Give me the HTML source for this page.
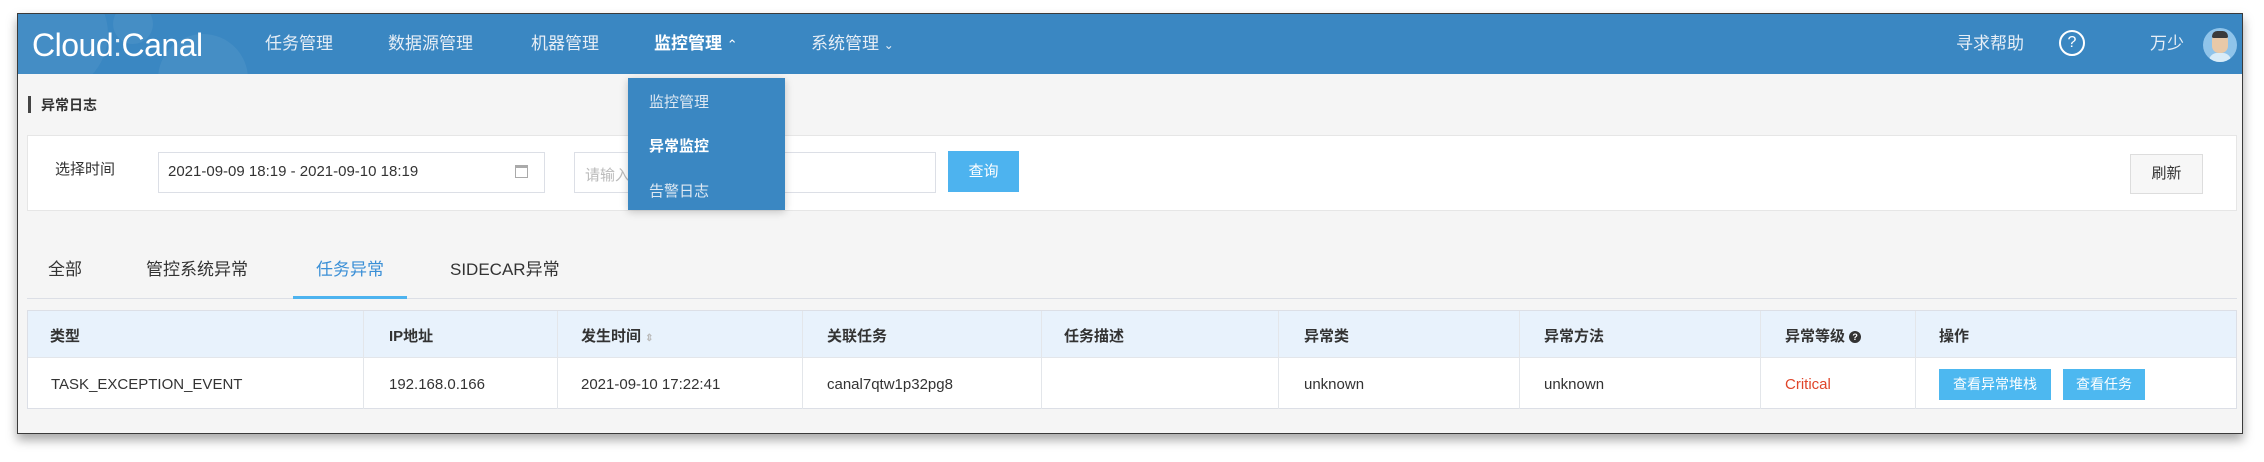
<!DOCTYPE html>
<html><head><meta charset="utf-8"><style>
*{margin:0;padding:0;box-sizing:border-box}
body{width:2264px;height:462px;background:#fff;position:relative;overflow:hidden;font-family:"Liberation Sans","Noto Sans CJK SC",sans-serif}
.abs{position:absolute}
.win{left:17px;top:13px;width:2226px;height:421px;background:#f5f5f5;border:1px solid #3a3a3a;box-shadow:0 6px 10px rgba(0,0,0,.35);overflow:hidden}
.nav{left:0;top:0;width:2226px;height:60px;background:#3a87c2}
.nav .it{position:absolute;top:0;line-height:60px;color:#e6eef6;font-size:17px}
.t{white-space:nowrap}
.cell{position:absolute;font-size:15px;color:#333;white-space:nowrap}
.hd{font-weight:bold;color:#333}
.vl{position:absolute;top:297px;width:1px;height:98px;background:#e3e6ea}
</style></head><body>
<div class="abs win">
 <div class="abs nav">
  <div class="abs" style="left:-30px;top:-40px;width:120px;height:120px;border-radius:50%;background:rgba(255,255,255,.05)"></div>
  <div class="abs" style="left:95px;top:-10px;width:40px;height:40px;border-radius:50%;background:rgba(255,255,255,.06)"></div>
  <div class="abs" style="left:140px;top:20px;width:90px;height:90px;border-radius:50%;background:rgba(255,255,255,.06)"></div>
  <div class="abs t" style="left:14px;top:12px;font-size:32px;color:#fff;letter-spacing:-0.5px;line-height:38px">Cloud<span style="opacity:.85">:</span>Canal</div>
  <div class="it" style="left:247px">任务管理</div>
  <div class="it" style="left:370px">数据源管理</div>
  <div class="it" style="left:513px">机器管理</div>
  <div class="it" style="left:636px;color:#fff;font-weight:bold">监控管理 <span style="font-size:13px;font-weight:normal">&#8963;</span></div>
  <div class="it" style="left:793px">系统管理 <span style="font-size:12px">&#8964;</span></div>
  <div class="it" style="left:1938px">寻求帮助</div>
  <div class="abs" style="left:2041px;top:16px;width:26px;height:26px;border:2px solid #fff;border-radius:50%;color:#fff;font-size:16px;text-align:center;line-height:22px">?</div>
  <div class="it" style="left:2132px">万少</div>
  <div class="abs" style="left:2185px;top:14px;width:34px;height:34px;border-radius:50%;background:#8fc4ea;overflow:hidden">
   <div class="abs" style="left:9px;top:5px;width:16px;height:20px;border-radius:7px;background:#e8c9a8"></div>
   <div class="abs" style="left:9px;top:3px;width:16px;height:7px;border-radius:6px 6px 2px 2px;background:#3b3b3b"></div>
   <div class="abs" style="left:6px;top:25px;width:22px;height:12px;border-radius:8px 8px 0 0;background:#d8ecf8"></div>
  </div>
 </div>
 <div class="abs" style="left:10px;top:82px;width:3px;height:17px;background:#444"></div>
 <div class="abs t" style="left:23px;top:81px;font-size:14px;color:#333;font-weight:bold">异常日志</div>
 <div class="abs" style="left:9px;top:121px;width:2210px;height:76px;background:#fff;border:1px solid #e6e6e6"></div>
 <div class="abs t" style="left:37px;top:144px;font-size:15px;color:#333">选择时间</div>
 <div class="abs" style="left:140px;top:138px;width:387px;height:41px;background:#fff;border:1px solid #dcdfe6"></div>
 <div class="abs t" style="left:150px;top:149px;font-size:15px;color:#333">2021-09-09 18:19 - 2021-09-10 18:19</div>
 <div class="abs" style="left:497px;top:151px;width:13px;height:13px;border:1px solid #aaa;border-top-width:3px"></div>
 <div class="abs" style="left:556px;top:138px;width:362px;height:41px;background:#fff;border:1px solid #dcdfe6"></div>
 <div class="abs t" style="left:567px;top:150px;font-size:15px;color:#bbb">请输入</div>
 <div class="abs t" style="left:930px;top:137px;width:71px;height:41px;background:#4db3ef;color:#fff;font-size:15px;text-align:center;line-height:41px">查询</div>
 <div class="abs t" style="left:2112px;top:140px;width:73px;height:40px;background:#f7f7f7;border:1px solid #ddd;color:#333;font-size:15px;text-align:center;line-height:38px">刷新</div>
 <div class="abs t" style="left:30px;top:241px;font-size:17px;color:#333">全部</div>
 <div class="abs t" style="left:128px;top:241px;font-size:17px;color:#333">管控系统异常</div>
 <div class="abs t" style="left:298px;top:241px;font-size:17px;color:#3a8fd6">任务异常</div>
 <div class="abs t" style="left:432px;top:241px;font-size:17px;color:#333">SIDECAR异常</div>
 <div class="abs" style="left:9px;top:284px;width:2210px;height:1px;background:#dcdfe6"></div>
 <div class="abs" style="left:275px;top:282px;width:114px;height:3px;background:#4db3ef"></div>
 <div class="abs" style="left:9px;top:296px;width:2210px;height:99px;background:#fff;border:1px solid #dcdfe6"></div>
 <div class="abs" style="left:10px;top:297px;width:2208px;height:47px;background:#e8f2fc;border-bottom:1px solid #e3e6ea"></div>
 <div class="vl" style="left:345px"></div><div class="vl" style="left:539px"></div><div class="vl" style="left:784px"></div><div class="vl" style="left:1023px"></div><div class="vl" style="left:1260px"></div><div class="vl" style="left:1501px"></div><div class="vl" style="left:1742px"></div><div class="vl" style="left:1897px"></div>
 <div class="cell hd" style="left:32px;top:311px">类型</div>
 <div class="cell hd" style="left:371px;top:311px">IP地址</div>
 <div class="cell hd" style="left:563px;top:311px">发生时间 <span style="color:#bbb;font-size:10px">&#8661;</span></div>
 <div class="cell hd" style="left:809px;top:311px">关联任务</div>
 <div class="cell hd" style="left:1046px;top:311px">任务描述</div>
 <div class="cell hd" style="left:1286px;top:311px">异常类</div>
 <div class="cell hd" style="left:1526px;top:311px">异常方法</div>
 <div class="cell hd" style="left:1767px;top:311px">异常等级 <span style="display:inline-block;width:12px;height:12px;border-radius:50%;background:#333;color:#fff;font-size:9px;text-align:center;line-height:12px;vertical-align:1px">?</span></div>
 <div class="cell hd" style="left:1921px;top:311px">操作</div>
 <div class="cell" style="left:33px;top:362px">TASK_EXCEPTION_EVENT</div>
 <div class="cell" style="left:371px;top:362px">192.168.0.166</div>
 <div class="cell" style="left:563px;top:362px">2021-09-10 17:22:41</div>
 <div class="cell" style="left:809px;top:362px">canal7qtw1p32pg8</div>
 <div class="cell" style="left:1286px;top:362px">unknown</div>
 <div class="cell" style="left:1526px;top:362px">unknown</div>
 <div class="cell" style="left:1767px;top:362px;color:#e0452a">Critical</div>
 <div class="abs t" style="left:1921px;top:355px;width:112px;height:31px;background:#4db8f0;color:#fff;font-size:14px;text-align:center;line-height:31px">查看异常堆栈</div>
 <div class="abs t" style="left:2045px;top:355px;width:82px;height:31px;background:#4db8f0;color:#fff;font-size:14px;text-align:center;line-height:31px">查看任务</div>
 <div class="abs" style="left:610px;top:64px;width:157px;height:132px;background:#3a87c2;box-shadow:0 2px 8px rgba(0,0,0,.2)">
  <div class="abs t" style="left:21px;top:13px;font-size:15px;color:#dfe9f3">监控管理</div>
  <div class="abs t" style="left:21px;top:57px;font-size:15px;color:#fff;font-weight:bold">异常监控</div>
  <div class="abs t" style="left:21px;top:102px;font-size:15px;color:#dfe9f3">告警日志</div>
 </div>
</div>
</body></html>
